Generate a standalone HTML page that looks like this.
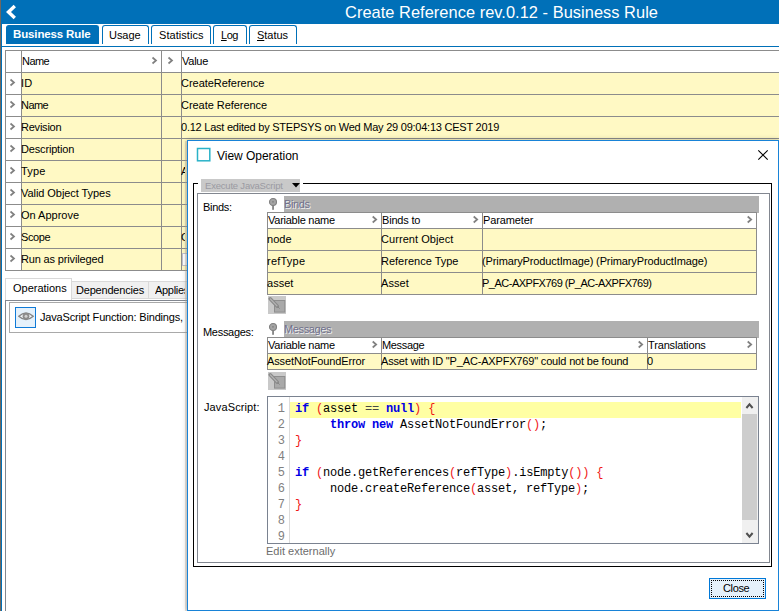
<!DOCTYPE html>
<html>
<head>
<meta charset="utf-8">
<title>Create Reference rev.0.12 - Business Rule</title>
<style>
html,body{margin:0;padding:0;}
body{width:779px;height:611px;overflow:hidden;background:#fff;position:relative;
  font-family:"Liberation Sans",sans-serif;font-size:11px;color:#000;}
.abs{position:absolute;}
.t{position:absolute;white-space:nowrap;line-height:14px;height:14px;letter-spacing:-0.2px;}
/* window frame */
#edgeL0{left:0;top:0;width:1px;height:611px;background:#70675f;}
#edgeL{left:1px;top:0;width:1px;height:611px;background:#0070b8;}
#hdr{left:1px;top:0;width:778px;height:24px;background:#0070b8;}
#title{left:345px;top:2px;font-size:16.4px;line-height:20px;height:20px;color:#fff;letter-spacing:0;}
/* top tabs */
.tab{position:absolute;top:25px;height:19px;box-sizing:border-box;border:1px solid #0070b8;border-bottom:none;
  border-radius:3px 3px 0 0;background:#fff;}
.tab.sel{background:#0070b8;top:25px;height:19px;}
#tabline{left:2px;top:46px;width:777px;height:1px;background:#0070b8;}
/* main table */
#mtbl{left:5px;top:50px;width:774px;height:221px;background:#fff9c4;border-top:1px solid #8c8c8c;border-left:1px solid #8c8c8c;box-sizing:border-box;}
#mtbl .hd{position:absolute;left:0;top:0;width:773px;height:21px;background:#fff;}
#mtbl .c0{position:absolute;left:0;top:0;width:15px;height:220px;background:#fff;}
.hl{position:absolute;left:0;width:773px;height:1px;background:#8c8c8c;}
.vl{position:absolute;top:0;width:1px;height:220px;background:#8c8c8c;}
.chev{position:absolute;width:5px;height:7px;}
/* lower tabs */
.ltab{position:absolute;box-sizing:border-box;background:#f0f0f0;border:1px solid #d9d9d9;}
/* dialog */
#dlg{left:187px;top:140px;width:592px;height:471px;box-sizing:border-box;background:#fff;border:1px solid #1883d7;box-shadow:0 0 5px rgba(0,0,0,.28);}
.yrow{position:absolute;background:#fff9c4;}
.g{position:absolute;background:#8c8c8c;}
.code{position:absolute;white-space:pre;font-family:"Liberation Mono",monospace;font-size:12px;line-height:16px;height:16px;letter-spacing:-0.2px;color:#000;}
.kw{color:#0000e6;font-weight:bold;}
.br{color:#f01818;}
.op{color:#484848;}
.ln{position:absolute;width:17px;text-align:right;font-family:"Liberation Mono",monospace;font-size:12px;line-height:16px;height:16px;color:#808080;}
#focus{background:
 repeating-linear-gradient(90deg,#000 0 1px,transparent 1px 2px) 0 0/100% 1px no-repeat,
 repeating-linear-gradient(90deg,#000 0 1px,transparent 1px 2px) 0 100%/100% 1px no-repeat,
 repeating-linear-gradient(180deg,#000 0 1px,transparent 1px 2px) 0 0/1px 100% no-repeat,
 repeating-linear-gradient(180deg,#000 0 1px,transparent 1px 2px) 100% 0/1px 100% no-repeat;}
</style>
</head>
<body>
<!-- ===== main window ===== -->
<div class="abs" id="hdr"></div>
<div class="abs" id="edgeL"></div>
<div class="abs" id="edgeL0"></div>
<svg class="abs" style="left:4px;top:3px" width="14" height="18" viewBox="0 0 14 18"><path d="M10.8 3.1 L4.5 9 L10.8 14.9" fill="none" stroke="#fff" stroke-width="3.4"/></svg>
<div class="t" id="title" style="left:345px;letter-spacing:0.042px;">Create Reference rev.0.12 - Business Rule</div>

<div class="tab sel" style="left:6px;width:93px;"></div>
<div class="t" style="left:13px;top:27px;color:#fff;font-weight:bold;font-size:11.5px;letter-spacing:-0.135px;">Business Rule</div>
<div class="tab" style="left:102px;width:47px;"></div>
<div class="t" style="left:109px;top:28px;letter-spacing:-0.059px;">Usage</div>
<div class="tab" style="left:151px;width:60px;"></div>
<div class="t" style="left:159px;top:28px;letter-spacing:0.048px;">Statistics</div>
<div class="tab" style="left:213px;width:34px;"></div>
<div class="t" style="left:221px;top:28px;letter-spacing:-0.458px;"><u>L</u>og</div>
<div class="tab" style="left:249px;width:48px;"></div>
<div class="t" style="left:257px;top:28px;letter-spacing:-0.034px;"><u>S</u>tatus</div>
<div class="abs" id="tabline"></div>

<div class="abs" id="mtbl">
  <div class="hd"></div>
  <div class="c0"></div>
  <div class="hl" style="top:21px"></div>
  <div class="hl" style="top:43px"></div>
  <div class="hl" style="top:65px"></div>
  <div class="hl" style="top:87px"></div>
  <div class="hl" style="top:109px"></div>
  <div class="hl" style="top:131px"></div>
  <div class="hl" style="top:153px"></div>
  <div class="hl" style="top:175px"></div>
  <div class="hl" style="top:197px"></div>
  <div class="hl" style="top:219px"></div>
  <div class="vl" style="left:15px"></div>
  <div class="vl" style="left:155px"></div>
  <div class="vl" style="left:175px"></div>
</div>
<div class="t" style="left:22px;top:54px;letter-spacing:-0.561px;">Name</div>
<div class="t" style="left:182px;top:54px;letter-spacing:-0.246px;">Value</div>
<div class="t" style="left:21px;top:76px;letter-spacing:0.150px;">ID</div>
<div class="t" style="left:181px;top:76px;letter-spacing:-0.032px;">CreateReference</div>
<div class="t" style="left:21px;top:98px;letter-spacing:-0.561px;">Name</div>
<div class="t" style="left:181px;top:98px;letter-spacing:-0.046px;">Create Reference</div>
<div class="t" style="left:21px;top:120px;letter-spacing:-0.223px;">Revision</div>
<div class="t" style="left:181px;top:120px;letter-spacing:-0.237px;">0.12 Last edited by STEPSYS on Wed May 29 09:04:13 CEST 2019</div>
<div class="t" style="left:21px;top:142px;letter-spacing:-0.166px;">Description</div>
<div class="t" style="left:21px;top:164px;letter-spacing:0.135px;">Type</div>
<div class="t" style="left:181px;top:164px;width:4.3px;overflow:hidden;">Action</div>
<div class="t" style="left:21px;top:186px;letter-spacing:-0.061px;">Valid Object Types</div>
<div class="t" style="left:21px;top:208px;letter-spacing:-0.009px;">On Approve</div>
<div class="t" style="left:21px;top:230px;letter-spacing:-0.381px;">Scope</div>
<div class="t" style="left:181px;top:230px;width:4.3px;overflow:hidden;">Global</div>
<div class="t" style="left:21px;top:252px;letter-spacing:-0.153px;">Run as privileged</div>
<svg class="abs" style="left:0;top:50px" width="180" height="222" viewBox="0 0 180 222">
  <g fill="none" stroke="#808080" stroke-width="1.7">
    <path d="M152.5 7.5 L156 10.5 L152.5 13.5"/>
    <path d="M168.5 7.5 L172 10.5 L168.5 13.5"/>
    <path d="M10.5 29.5 L14 32.5 L10.5 35.5"/>
    <path d="M10.5 51.5 L14 54.5 L10.5 57.5"/>
    <path d="M10.5 73.5 L14 76.5 L10.5 79.5"/>
    <path d="M10.5 95.5 L14 98.5 L10.5 101.5"/>
    <path d="M10.5 117.5 L14 120.5 L10.5 123.5"/>
    <path d="M10.5 139.5 L14 142.5 L10.5 145.5"/>
    <path d="M10.5 161.5 L14 164.5 L10.5 167.5"/>
    <path d="M10.5 183.5 L14 186.5 L10.5 189.5"/>
    <path d="M10.5 205.5 L14 208.5 L10.5 211.5"/>
  </g>
</svg>

<div class="abs" style="left:182px;top:253px;width:13px;height:13px;box-sizing:border-box;border:1px solid #c3c3cb;background:#fff;"></div>
<!-- lower tabs -->
<div class="ltab" style="left:71px;top:281px;width:78px;height:18px;"></div>
<div class="ltab" style="left:148px;top:281px;width:60px;height:18px;"></div>
<div class="abs" style="left:5px;top:300px;width:200px;height:311px;border-left:1px solid #828790;border-top:1px solid #828790;box-sizing:border-box;"></div>
<div class="ltab" style="left:5px;top:278px;width:67px;height:22px;background:#fff;border-bottom:none;"></div>
<div class="t" style="left:13px;top:281px;letter-spacing:-0.011px;">Operations</div>
<div class="t" style="left:76px;top:283px;letter-spacing:-0.195px;">Dependencies</div>
<div class="t" style="left:155px;top:283px;width:30.3px;overflow:hidden;letter-spacing:-0.3px;">Applies</div>
<div class="abs" style="left:9px;top:302px;width:190px;height:31px;border:1px solid #a9a9a9;border-right:none;box-sizing:border-box;"></div>
<div class="abs" style="left:15px;top:307px;width:21px;height:21px;background:#e5f1fb;border:1px solid #0f7ad7;box-sizing:border-box;"></div>
<svg class="abs" style="left:18px;top:311px" width="16" height="11" viewBox="0 0 16 11"><path d="M0.8 5.3 Q8 -1.3 15.2 5.3 Q8 11.9 0.8 5.3 Z" fill="#f4f8fb" stroke="#858585" stroke-width="1.4"/><circle cx="8" cy="5.3" r="3.4" fill="#8c8c8c"/><circle cx="8" cy="5.2" r="1.5" fill="#d2d2d2"/></svg>
<div class="t" style="left:40px;top:310px;letter-spacing:-0.166px;">JavaScript Function: Bindings,</div>

<!-- ===== dialog ===== -->
<div class="abs" style="left:185px;top:141px;width:2px;height:470px;background:rgba(190,180,165,.4);"></div>
<div class="abs" id="dlg"></div>
<svg class="abs" style="left:195px;top:146px" width="18" height="18" viewBox="0 0 18 18"><rect x="2.5" y="2.5" width="12.3" height="12.3" fill="#fff" stroke="#2ab2c8" stroke-width="1.5"/></svg>
<div class="t" style="left:217px;top:149px;font-size:12px;letter-spacing:-0.023px;">View Operation</div>
<svg class="abs" style="left:757px;top:149px" width="12" height="12" viewBox="0 0 12 12"><path d="M1.3 1.3 L10.7 10.7 M10.7 1.3 L1.3 10.7" stroke="#000" stroke-width="1.1" fill="none"/></svg>

<!-- group box -->
<div class="abs" style="left:193px;top:183px;width:579px;height:384px;box-sizing:border-box;border:1px solid #000;"></div>
<div class="abs" style="left:197px;top:193px;width:573px;height:370px;box-sizing:border-box;border:1px solid #828790;"></div>
<div class="abs" style="left:198px;top:178px;width:105px;height:14px;background:#fff;"></div>
<div class="abs" style="left:201px;top:179px;width:99px;height:13px;background:#c9c9c9;"></div>
<div class="t" style="left:205px;top:179px;font-size:9.5px;color:#9a9aa2;letter-spacing:-0.202px;">Execute JavaScript</div>
<svg class="abs" style="left:292px;top:183px" width="8" height="5" viewBox="0 0 8 5"><path d="M0 0 L8 0 L4 4.5 Z" fill="#000"/></svg>

<!-- Binds -->
<div class="t" style="left:203px;top:200px;letter-spacing:-0.313px;">Binds:</div>
<svg class="abs" style="left:268px;top:197px" width="10" height="14" viewBox="0 0 10 14"><rect x="4.2" y="8" width="1.7" height="4.8" fill="#7d7d7d"/><circle cx="5" cy="5" r="3.5" fill="#a4a4a4" stroke="#808080" stroke-width="1.1"/><circle cx="5" cy="4.8" r="0.9" fill="#808080"/></svg>
<div class="abs" style="left:284px;top:196px;width:475px;height:17px;background:#b0b0b0;"></div>
<div class="t" style="left:284px;top:197px;color:#70708c;text-shadow:1px 1px 0 #f0f0f0;letter-spacing:-0.366px;">Binds</div>

<div class="abs" id="btbl" style="left:267px;top:212px;width:490px;height:83px;background:#fff9c4;box-sizing:border-box;border:1px solid #8c8c8c;"></div>
<div class="abs" style="left:268px;top:213px;width:488px;height:16px;background:#fff;"></div>
<div class="g" style="left:268px;top:228px;width:488px;height:1px;"></div>
<div class="g" style="left:268px;top:250px;width:488px;height:1px;"></div>
<div class="g" style="left:268px;top:272px;width:488px;height:1px;"></div>
<div class="g" style="left:381px;top:213px;width:1px;height:81px;"></div>
<div class="g" style="left:482px;top:213px;width:1px;height:81px;"></div>
<div class="t" style="left:268px;top:213px;letter-spacing:-0.256px;">Variable name</div>
<div class="t" style="left:382px;top:213px;letter-spacing:-0.181px;">Binds to</div>
<div class="t" style="left:483px;top:213px;letter-spacing:-0.118px;">Parameter</div>
<div class="t" style="left:267px;top:232px;letter-spacing:0.054px;">node</div>
<div class="t" style="left:381px;top:232px;letter-spacing:0.062px;">Current Object</div>
<div class="t" style="left:267px;top:254px;letter-spacing:0.230px;">refType</div>
<div class="t" style="left:381px;top:254px;letter-spacing:0.002px;">Reference Type</div>
<div class="t" style="left:482px;top:254px;letter-spacing:-0.120px;">(PrimaryProductImage) (PrimaryProductImage)</div>
<div class="t" style="left:267px;top:276px;letter-spacing:0.021px;">asset</div>
<div class="t" style="left:381px;top:276px;letter-spacing:0.057px;">Asset</div>
<div class="t" style="left:482px;top:276px;letter-spacing:-0.501px;">P_AC-AXPFX769 (P_AC-AXPFX769)</div>
<svg class="abs" style="left:370px;top:215px" width="390" height="10" viewBox="0 0 390 10"><g fill="none" stroke="#808080" stroke-width="1.7"><path d="M2.7 1.5 L6.2 4.5 L2.7 7.5"/><path d="M103.7 1.5 L107.2 4.5 L103.7 7.5"/><path d="M377.7 1.5 L381.2 4.5 L377.7 7.5"/></g></svg>

<!-- pencil 1 -->
<svg class="abs pen" style="left:268px;top:296px" width="18" height="18" viewBox="0 0 18 18"><rect x="0" y="0" width="18" height="18" fill="#c9c9c9"/><rect x="6.5" y="4.5" width="10.3" height="11.6" fill="#a9a9a9" stroke="#8e8e8e" stroke-width="1"/><path d="M2.2 2.8 L9.3 10.2" stroke="#8a8a8a" stroke-width="3.4" stroke-linecap="round" fill="none"/><path d="M2.4 3 L9 9.9" stroke="#b4b4b4" stroke-width="1.2" stroke-linecap="round" fill="none"/><path d="M9.6 10.5 L11.6 12.6" stroke="#858585" stroke-width="1" fill="none"/></svg>

<!-- Messages -->
<div class="t" style="left:203px;top:325px;letter-spacing:-0.289px;">Messages:</div>
<svg class="abs" style="left:268px;top:322px" width="10" height="14" viewBox="0 0 10 14"><rect x="4.2" y="8" width="1.7" height="4.8" fill="#7d7d7d"/><circle cx="5" cy="5" r="3.5" fill="#a4a4a4" stroke="#808080" stroke-width="1.1"/><circle cx="5" cy="4.8" r="0.9" fill="#808080"/></svg>
<div class="abs" style="left:284px;top:321px;width:475px;height:17px;background:#b0b0b0;"></div>
<div class="t" style="left:284px;top:322px;color:#70708c;text-shadow:1px 1px 0 #f0f0f0;letter-spacing:-0.380px;">Messages</div>
<div class="abs" style="left:267px;top:337px;width:490px;height:33px;background:#fff9c4;box-sizing:border-box;border:1px solid #8c8c8c;"></div>
<div class="abs" style="left:268px;top:338px;width:488px;height:15px;background:#fff;"></div>
<div class="g" style="left:268px;top:353px;width:488px;height:1px;"></div>
<div class="g" style="left:381px;top:338px;width:1px;height:31px;"></div>
<div class="g" style="left:647px;top:338px;width:1px;height:31px;"></div>
<div class="t" style="left:268px;top:338px;letter-spacing:-0.256px;">Variable name</div>
<div class="t" style="left:382px;top:338px;letter-spacing:-0.349px;">Message</div>
<div class="t" style="left:648px;top:338px;letter-spacing:-0.151px;">Translations</div>
<div class="t" style="left:267px;top:354px;letter-spacing:-0.120px;">AssetNotFoundError</div>
<div class="t" style="left:381px;top:354px;letter-spacing:-0.170px;">Asset with ID "P_AC-AXPFX769" could not be found</div>
<div class="t" style="left:647px;top:354px;">0</div>
<svg class="abs" style="left:370px;top:340px" width="390" height="10" viewBox="0 0 390 10"><g fill="none" stroke="#808080" stroke-width="1.7"><path d="M2.7 1.5 L6.2 4.5 L2.7 7.5"/><path d="M268.7 1.5 L272.2 4.5 L268.7 7.5"/><path d="M377.7 1.5 L381.2 4.5 L377.7 7.5"/></g></svg>

<!-- pencil 2 -->
<svg class="abs pen" style="left:268px;top:372px" width="18" height="18" viewBox="0 0 18 18"><rect x="0" y="0" width="18" height="18" fill="#c9c9c9"/><rect x="6.5" y="4.5" width="10.3" height="11.6" fill="#a9a9a9" stroke="#8e8e8e" stroke-width="1"/><path d="M2.2 2.8 L9.3 10.2" stroke="#8a8a8a" stroke-width="3.4" stroke-linecap="round" fill="none"/><path d="M2.4 3 L9 9.9" stroke="#b4b4b4" stroke-width="1.2" stroke-linecap="round" fill="none"/><path d="M9.6 10.5 L11.6 12.6" stroke="#858585" stroke-width="1" fill="none"/></svg>

<!-- JavaScript editor -->
<div class="t" style="left:204px;top:400px;letter-spacing:0.116px;">JavaScript:</div>
<div class="abs" id="ed" style="left:267px;top:396px;width:492px;height:148px;box-sizing:border-box;border:1px solid #7a8290;background:#fff;overflow:hidden;">
<div class="abs" style="left:21px;top:0;width:1px;height:146px;background:#dcdcdc;"></div>
<div class="abs" style="left:22px;top:5px;width:451px;height:16px;background:#ffffa3;"></div>
<div class="ln" style="left:0px;top:4px;">1</div>
<div class="code" style="left:27px;top:4px;"><span class="kw">if</span> <span class="br">(</span>asset <span class="op">==</span> <span class="kw">null</span><span class="br">)</span> <span class="br">{</span></div>
<div class="ln" style="left:0px;top:20px;">2</div>
<div class="code" style="left:27px;top:20px;">     <span class="kw">throw</span> <span class="kw">new</span> AssetNotFoundError<span class="br">()</span>;</div>
<div class="ln" style="left:0px;top:36px;">3</div>
<div class="code" style="left:27px;top:36px;"><span class="br">}</span></div>
<div class="ln" style="left:0px;top:52px;">4</div>
<div class="ln" style="left:0px;top:68px;">5</div>
<div class="code" style="left:27px;top:68px;"><span class="kw">if</span> <span class="br">(</span>node.getReferences<span class="br">(</span>refType<span class="br">)</span>.isEmpty<span class="br">())</span> <span class="br">{</span></div>
<div class="ln" style="left:0px;top:84px;">6</div>
<div class="code" style="left:27px;top:84px;">     node.createReference<span class="br">(</span>asset, refType<span class="br">)</span>;</div>
<div class="ln" style="left:0px;top:100px;">7</div>
<div class="code" style="left:27px;top:100px;"><span class="br">}</span></div>
<div class="ln" style="left:0px;top:116px;">8</div>
<div class="ln" style="left:0px;top:132px;">9</div>
<!-- scrollbar -->
<div class="abs" style="left:474px;top:0;width:16px;height:146px;background:#f0f0f0;"></div>
<div class="abs" style="left:474px;top:17px;width:15px;height:106px;background:#cdcdcd;"></div>
<svg class="abs" style="left:474px;top:0" width="16" height="146" viewBox="0 0 16 146"><g fill="none" stroke="#505050" stroke-width="2"><path d="M4.4 11 L7.5 7.4 L10.6 11"/><path d="M4.4 136 L7.5 139.6 L10.6 136"/></g></svg>
</div>
<div class="t" style="left:266px;top:544px;color:#6d6d6d;letter-spacing:0.004px;">Edit externally</div>

<!-- Close button -->
<div class="abs" style="left:709px;top:578px;width:57px;height:21px;box-sizing:border-box;border:1px solid #0078d7;background:#e5f1fb;"></div>
<div class="abs" id="focus" style="left:711px;top:580px;width:53px;height:17px;"></div>
<div class="t" style="left:723px;top:581px;letter-spacing:-0.365px;">Close</div>
</body>
</html>
